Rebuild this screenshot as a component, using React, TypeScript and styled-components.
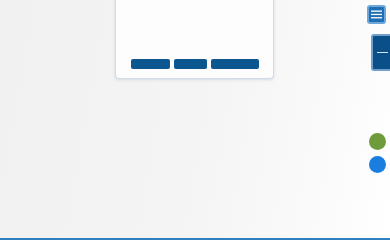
import React from "react";
import styled, { createGlobalStyle } from "styled-components";

const Global = createGlobalStyle`
  html, body { margin: 0; padding: 0; }
  body { font-family: "Liberation Sans", Arial, sans-serif; overflow: hidden; }
  #root { width: 390px; height: 240px; }
`;

const Page = styled.div`
  width: 390px;
  height: 240px;
  box-sizing: border-box;
  display: flex;
  flex-direction: row;
  overflow: hidden;
  background: linear-gradient(100deg, #f1f1f1 0%, #f4f4f4 50%, #fbfbfb 85%, #ffffff 100%);
  border-bottom: 2px solid #2f7fc1;
`;

const Stage = styled.div`
  flex: 1;
  display: flex;
  align-items: flex-start;
  padding-left: 115px;
`;

const Card = styled.div`
  width: 159px;
  height: 100px;
  margin-top: -21px;
  box-sizing: border-box;
  background: #fdfdfd;
  border: 1px solid #cfdbe7;
  border-radius: 0 0 4px 4px;
  box-shadow: 0 1px 3px rgba(120, 140, 170, 0.25);
  display: flex;
  flex-direction: column;
  justify-content: flex-end;
  padding: 0 0 9px 15px;
`;

const ButtonRow = styled.div`
  display: flex;
  gap: 4px;
`;

const Bar = styled.div<{ $w: number }>`
  width: ${(p) => p.$w}px;
  height: 10px;
  background: #0d5791;
  border-radius: 2px;
`;

const Rail = styled.div`
  width: 23px;
  display: flex;
  flex-direction: column;
  align-items: flex-start;
`;

const MenuButton = styled.div`
  margin-top: 5px;
  margin-left: 0px;
  width: 19px;
  height: 19px;
  box-sizing: border-box;
  border-radius: 3px;
  background: #1f6fb6;
  border: 2px solid #6fa7d8;
  display: flex;
  align-items: center;
  justify-content: center;
`;

const TallButton = styled.div`
  margin-top: 10px;
  margin-left: 4px;
  width: 24px;
  height: 37px;
  box-sizing: border-box;
  border-radius: 3px;
  background: #0b4f89;
  border: 2px solid #6f9fca;
  display: flex;
  align-items: center;
  padding-left: 4px;
`;

const Dash = styled.div`
  width: 11px;
  height: 1px;
  background: #d7e4f0;
`;

const Dot = styled.div<{ $c: string; $mt: number }>`
  margin-top: ${(p) => p.$mt}px;
  margin-left: 2px;
  width: 17px;
  height: 17px;
  border-radius: 50%;
  background: ${(p) => p.$c};
`;

export default function App() {
  return (
    <>
      <Global />
      <Page>
        <Stage>
          <Card>
            <ButtonRow>
              <Bar $w={39} />
              <Bar $w={33} />
              <Bar $w={48} />
            </ButtonRow>
          </Card>
        </Stage>
        <Rail>
          <MenuButton>
            <svg width="11" height="9" viewBox="0 0 11 9">
              <rect x="0" y="0.5" width="11" height="1.3" fill="#fff" />
              <rect x="0" y="3.8" width="11" height="1.3" fill="#fff" />
              <rect x="0" y="7.1" width="11" height="1.3" fill="#fff" />
            </svg>
          </MenuButton>
          <TallButton>
            <Dash />
          </TallButton>
          <Dot $c="#6e9c3c" $mt={62} />
          <Dot $c="#1a7ee0" $mt={6} />
        </Rail>
      </Page>
    </>
  );
}
